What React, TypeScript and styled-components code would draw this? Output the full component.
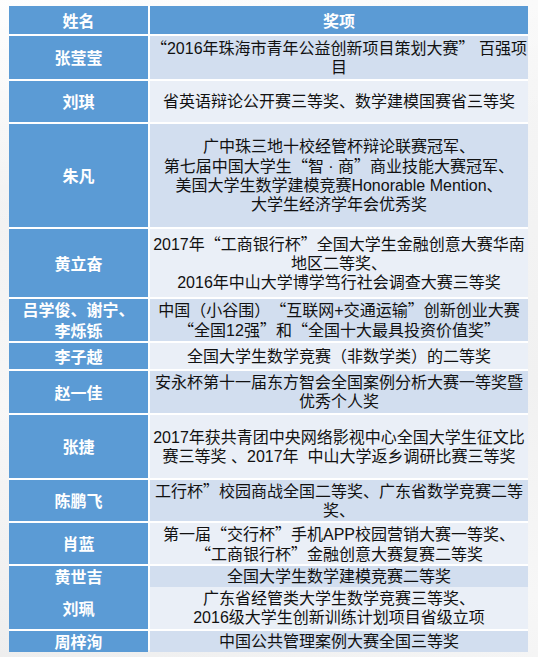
import React from "react";
import styled, { createGlobalStyle } from "styled-components";

const GlobalStyle = createGlobalStyle`
  html, body {
    margin: 0;
    padding: 0;
  }
  body {
    width: 538px;
    height: 657px;
    overflow: hidden;
    background:
      linear-gradient(168deg, rgba(255,255,255,0.9) 0%, rgba(255,255,255,0) 30%),
      linear-gradient(200deg, #f6f6f6 0%, #f1f1f1 45%, #f7f7f7 70%, #eeeeee 100%);
    font-family: "Liberation Sans", "Noto Sans CJK SC", sans-serif;
  }
`;

const Page = styled.div`
  padding: 6px 10px 0 9px;
`;

const Table = styled.div`
  width: 519px;
  display: flex;
  flex-direction: column;
  gap: 2px;
  background: #ffffff;
`;

const Row = styled.div<{ $h: number }>`
  display: grid;
  grid-template-columns: 139px 378px;
  column-gap: 2px;
  height: ${(p) => p.$h}px;
`;

const HeadCell = styled.div`
  background: #5b9bd5;
  color: #ffffff;
  font-family: "Noto Sans CJK SC", sans-serif;
  font-weight: 700;
  font-size: 16px;
  display: flex;
  align-items: center;
  justify-content: center;
`;

const NameCell = styled.div`
  background: #5b9bd5;
  color: #ffffff;
  font-family: "Noto Sans CJK SC", sans-serif;
  font-weight: 700;
  font-size: 16px;
  line-height: 21px;
  display: flex;
  flex-direction: column;
  align-items: center;
  justify-content: center;
  text-align: center;
`;

const AwardCell = styled.div<{ $alt: boolean }>`
  background: ${(p) => (p.$alt ? "#d2deef" : "#eaeff7")};
  color: #111111;
  font-size: 16px;
  line-height: 19px;
  display: flex;
  flex-direction: column;
  align-items: center;
  justify-content: center;
  text-align: center;
`;

const Line = styled.span`
  display: block;
  white-space: pre;
`;

const Quote = styled.span<{ $open: boolean }>`
  display: inline-block;
  width: 1em;
  font-family: "Noto Sans CJK SC", sans-serif;
  text-align: ${(p) => (p.$open ? "right" : "left")};
`;

type Entry = { name: string[]; award: string[]; h: number };

const rows: Entry[] = [
  { name: ["张莹莹"], award: ["“2016年珠海市青年公益创新项目策划大赛” 百强项", "目"], h: 43 },
  { name: ["刘琪"], award: ["省英语辩论公开赛三等奖、数学建模国赛省三等奖"], h: 41 },
  {
    name: ["朱凡"],
    award: [
      "广中珠三地十校经管杯辩论联赛冠军、",
      "第七届中国大学生“智 · 商”商业技能大赛冠军、",
      "美国大学生数学建模竞赛Honorable Mention、",
      "大学生经济学年会优秀奖",
    ],
    h: 103,
  },
  {
    name: ["黄立奋"],
    award: [
      "2017年“工商银行杯”全国大学生金融创意大赛华南",
      "地区二等奖、",
      "2016年中山大学博学笃行社会调查大赛三等奖",
    ],
    h: 68,
  },
  {
    name: ["吕学俊、谢宁、", "李烁铄"],
    award: ["中国（小谷围）“互联网+交通运输”创新创业大赛", "“全国12强”和“全国十大最具投资价值奖”"],
    h: 42,
  },
  { name: ["李子越"], award: ["全国大学生数学竞赛（非数学类）的二等奖"], h: 26 },
  { name: ["赵一佳"], award: ["安永杯第十一届东方智会全国案例分析大赛一等奖暨", "优秀个人奖"], h: 42 },
  {
    name: ["张捷"],
    award: ["2017年获共青团中央网络影视中心全国大学生征文比", "赛三等奖 、2017年  中山大学返乡调研比赛三等奖"],
    h: 63,
  },
  { name: ["陈鹏飞"], award: ["工行杯”校园商战全国二等奖、广东省数学竞赛二等", "奖、"], h: 41 },
  { name: ["肖蓝"], award: ["第一届“交行杯”手机APP校园营销大赛一等奖、", "“工商银行杯”金融创意大赛复赛二等奖"], h: 41 },
  { name: ["黄世吉"], award: ["全国大学生数学建模竞赛二等奖"], h: 19 },
  { name: ["刘珮"], award: ["广东省经管类大学生数学竞赛三等奖、", "2016级大学生创新训练计划项目省级立项"], h: 42 },
  { name: ["周梓洵"], award: ["中国公共管理案例大赛全国三等奖"], h: 19 },
];

function renderLine(text: string) {
  const parts = text.split(/([“”])/);
  return parts.map((part, i) => {
    if (part === "“") return <Quote key={i} $open>“</Quote>;
    if (part === "”") return <Quote key={i} $open={false}>”</Quote>;
    return <React.Fragment key={i}>{part}</React.Fragment>;
  });
}

export default function App() {
  return (
    <>
      <GlobalStyle />
      <Page>
        <Table>
          <Row $h={28}>
            <HeadCell>姓名</HeadCell>
            <HeadCell>奖项</HeadCell>
          </Row>
          {rows.map((r, idx) => (
            <Row key={idx} $h={r.h}>
              <NameCell>
                {r.name.map((n, i) => (
                  <Line key={i}>{n}</Line>
                ))}
              </NameCell>
              <AwardCell $alt={idx % 2 === 0}>
                {r.award.map((a, i) => (
                  <Line key={i}>{renderLine(a)}</Line>
                ))}
              </AwardCell>
            </Row>
          ))}
        </Table>
      </Page>
    </>
  );
}
